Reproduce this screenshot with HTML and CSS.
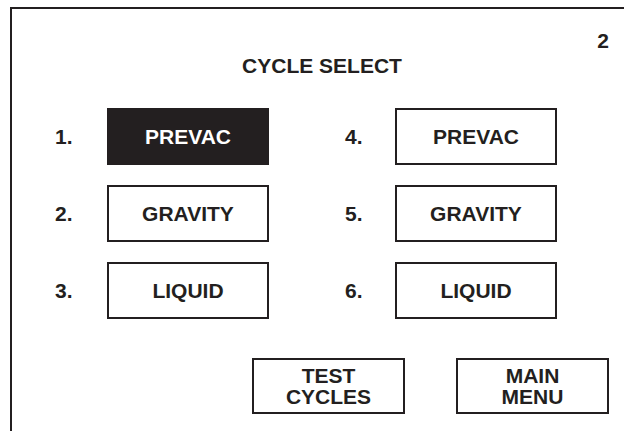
FILE: index.html
```html
<!DOCTYPE html>
<html lang="en">
<head>
  <meta charset="UTF-8">
  <title>Cycle Select</title>
  <link rel="stylesheet" href="styles.css">
</head>
<body>
  <div class="screen">
    <div class="page-num">2</div>
    <h1 class="title">CYCLE SELECT</h1>

    <div class="cycles">
      <span class="num">1.</span>
      <button class="key selected">PREVAC</button>
      <span class="spacer"></span>
      <span class="num">4.</span>
      <button class="key">PREVAC</button>

      <span class="num">2.</span>
      <button class="key">GRAVITY</button>
      <span class="spacer"></span>
      <span class="num">5.</span>
      <button class="key">GRAVITY</button>

      <span class="num">3.</span>
      <button class="key">LIQUID</button>
      <span class="spacer"></span>
      <span class="num">6.</span>
      <button class="key">LIQUID</button>
    </div>

    <div class="actions">
      <button class="key small">TEST<br>CYCLES</button>
      <button class="key small">MAIN<br>MENU</button>
    </div>
  </div>
</body>
</html>
```

FILE: styles.css
```css
body {
  margin: 0;
  padding: 0;
  background: #fff;
  color: #231f20;
  font-family: "Liberation Sans", Arial, sans-serif;
  font-weight: bold;
  font-size: 21px;
  width: 624px;
  height: 433px;
  overflow: hidden;
}

.screen {
  margin: 7px 0 0 10px;
  border-left: 2px solid #231f20;
  border-top: 2px solid #231f20;
  height: 424px;
  box-sizing: border-box;
}

.page-num {
  text-align: right;
  font-size: 21px;
  line-height: 24px;
  padding: 20px 15px 0 0;
}

.title {
  margin: 1px 0 0;
  padding-left: 8px;
  text-align: center;
  font-size: 21px;
  line-height: 24px;
}

.cycles {
  display: grid;
  grid-template-columns: 52px 162px 76px 50px 162px;
  grid-auto-rows: 57px;
  row-gap: 20px;
  margin-top: 30px;
  padding-left: 43px;
  align-items: center;
}

.num {
  font-size: 21px;
}

.key {
  font-family: inherit;
  font-weight: bold;
  color: #231f20;
  background: #fff;
  border: 2px solid #231f20;
  padding: 0;
  margin: 0;
  font-size: 21px;
  height: 57px;
  width: 162px;
  box-sizing: border-box;
}

.key.selected {
  background: #231f20;
  color: #fff;
}

.actions {
  display: flex;
  justify-content: flex-end;
  gap: 51px;
  margin-top: 39px;
  padding-right: 15px;
}

.key.small {
  width: 153px;
  height: 56px;
  line-height: 21px;
}
```
